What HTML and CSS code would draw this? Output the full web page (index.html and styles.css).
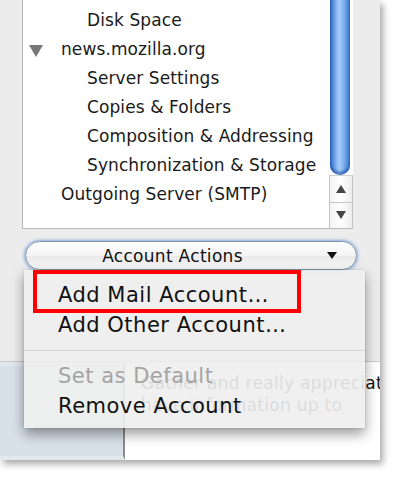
FILE: index.html
```html
<!DOCTYPE html>
<html>
<head>
<meta charset="utf-8">
<link rel="stylesheet" href="styles.css">
</head>
<body>
<div class="window">
  <div class="top">
    <div class="list">
      <div class="tree">
        <div class="row sub">Disk Space</div>
        <div class="row acct"><span class="twisty"></span>news.mozilla.org</div>
        <div class="row sub">Server Settings</div>
        <div class="row sub">Copies &amp; Folders</div>
        <div class="row sub">Composition &amp; Addressing</div>
        <div class="row sub">Synchronization &amp; Storage</div>
        <div class="row acct plain">Outgoing Server (SMTP)</div>
      </div>
      <div class="scrollbar">
        <div class="thumb"></div>
        <div class="arrows">
          <div class="arrow"><span class="tri-up"></span></div>
          <div class="arrow"><span class="tri-down"></span></div>
        </div>
      </div>
    </div>
    <div class="actions"><span class="label">Account Actions</span><span class="caret"></span></div>
  </div>
  <div class="bottom">
    <div class="sidebar"></div>
    <div class="content">
      <p class="line">Gather and really appreciate</p>
      <p class="line">have information up <span class="link">to</span></p>
    </div>
  </div>
  <div class="menu">
    <div class="item">Add Mail Account…</div>
    <div class="item">Add Other Account…</div>
    <div class="sep"></div>
    <div class="item disabled">Set as Default</div>
    <div class="item">Remove Account</div>
    <div class="highlight"></div>
  </div>
</div>
</body>
</html>
```
FILE: styles.css
```css
html, body {
  margin: 0;
  padding: 0;
  background: #ffffff;
}
body {
  width: 400px;
  height: 480px;
  overflow: hidden;
  font-family: "DejaVu Sans", "Liberation Sans", sans-serif;
  color: #111;
}
.window {
  position: relative;
  width: 380px;
  height: 460px;
  background: #ececec;
  box-shadow: 3px 4px 7px rgba(0, 0, 0, 0.35);
  display: flex;
  flex-direction: column;
}
.top {
  height: 362px;
  padding-left: 22px;
  box-sizing: border-box;
  border-bottom: 1px solid #c8c8c8;
}
.list {
  width: 331px;
  height: 229px;
  box-sizing: border-box;
  background: #fff;
  border-left: 1px solid #b8b8b8;
  border-bottom: 1px solid #b8b8b8;
  display: flex;
}
.tree {
  flex: 1;
  padding-top: 6px;
}
.row {
  height: 29px;
  line-height: 29px;
  font-size: 17px;
  letter-spacing: 0.1px;
  white-space: nowrap;
  color: #1a1a1a;
}
.sub {
  padding-left: 64px;
}
.acct {
  padding-left: 6px;
  display: flex;
  align-items: center;
}
.acct.plain {
  padding-left: 38px;
}
.twisty {
  width: 0;
  height: 0;
  border-left: 7px solid transparent;
  border-right: 7px solid transparent;
  border-top: 12px solid #777;
  margin-right: 18px;
  margin-top: 2px;
}
.scrollbar {
  width: 24px;
  display: flex;
  flex-direction: column;
}
.thumb {
  flex: 1;
  margin: 0 3px 0 1px;
  border-radius: 0 0 10px 10px;
  background: linear-gradient(to right, #2f67c6 0%, #6fa5ea 25%, #a9cdf6 45%, #79aeee 70%, #3a74d2 100%);
  box-shadow: inset 0 -3px 3px rgba(20, 60, 150, 0.6);
}
.arrows {
  height: 52px;
  border-left: 1px solid #c4c4c4;
  border-right: 1px solid #c4c4c4;
  border-top: 1px solid #d0d0d0;
  background: linear-gradient(to right, #f4f4f4, #ffffff 50%, #ececec);
  display: flex;
  flex-direction: column;
}
.arrow {
  flex: 1;
  display: flex;
  align-items: center;
  justify-content: center;
}
.arrow + .arrow {
  border-top: 1px solid #c8c8c8;
}
.tri-up {
  width: 0;
  height: 0;
  border-left: 5px solid transparent;
  border-right: 5px solid transparent;
  border-bottom: 8px solid #444;
}
.tri-down {
  width: 0;
  height: 0;
  border-left: 5px solid transparent;
  border-right: 5px solid transparent;
  border-top: 8px solid #444;
}
.actions {
  margin-top: 12px;
  margin-left: 3px;
  width: 332px;
  height: 29px;
  box-sizing: border-box;
  border: 1px solid #7f93ad;
  border-radius: 15px;
  background: linear-gradient(to bottom, #ffffff, #f3f3f3 50%, #e9e9e9 51%, #f7f7f7);
  box-shadow: 0 0 3px 1px rgba(100, 150, 215, 0.75);
  display: flex;
  align-items: center;
}
.label {
  flex: 1;
  text-align: center;
  font-size: 17px;
  letter-spacing: 0.3px;
  color: #111;
}
.caret {
  width: 0;
  height: 0;
  border-left: 5.5px solid transparent;
  border-right: 5.5px solid transparent;
  border-top: 7px solid #111;
  margin-right: 19px;
  margin-left: 8px;
}
.bottom {
  flex: 1;
  display: flex;
}
.sidebar {
  width: 125px;
  box-sizing: border-box;
  background: #d8e0e9;
  border: 4px solid #e3e8ee;
  border-left: none;
  border-right: 2px solid #8c8c8c;
}
.content {
  flex: 1;
  background: #fff;
  padding: 10px 0 0 16px;
  overflow: hidden;
}
.line {
  margin: 0;
  height: 22px;
  line-height: 22px;
  font-size: 17px;
  letter-spacing: 0.3px;
  white-space: nowrap;
  color: #111;
}
.link {
  color: #6a1a0a;
}
.menu {
  position: absolute;
  left: 24px;
  top: 270px;
  width: 341px;
  box-sizing: border-box;
  padding: 10px 0 7px 0;
  background: rgba(239, 239, 239, 0.91);
  box-shadow: 0 6px 12px rgba(0, 0, 0, 0.4), 0 0 1px rgba(0, 0, 0, 0.3);
}
.item {
  height: 30px;
  line-height: 30px;
  padding-left: 34px;
  font-size: 21px;
  letter-spacing: 0.5px;
  color: #111;
  white-space: nowrap;
}
.item.disabled {
  color: #a4a4a4;
}
.sep {
  height: 1px;
  margin: 10px 0 10px 0;
  background: #d2d2d2;
}
.highlight {
  position: absolute;
  left: 9px;
  top: 0;
  width: 268px;
  height: 43px;
  box-sizing: border-box;
  border: 4px solid #f00;
}
```
